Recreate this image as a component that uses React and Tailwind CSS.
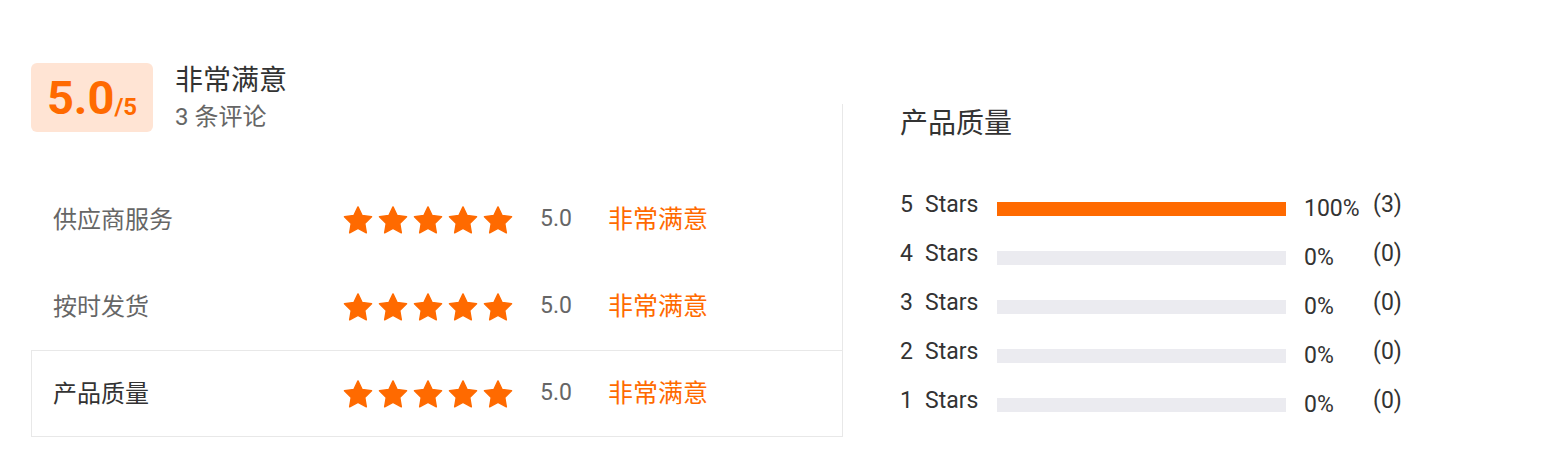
import React from "react";

const ORANGE = "text-[#ff6a00]";

const aspects = [
  { name: "供应商服务", score: "5.0", active: false },
  { name: "按时发货", score: "5.0", active: false },
  { name: "产品质量", score: "5.0", active: true },
];

const dist = [
  { star: 5, pct: 100, count: 3 },
  { star: 4, pct: 0, count: 0 },
  { star: 3, pct: 0, count: 0 },
  { star: 2, pct: 0, count: 0 },
  { star: 1, pct: 0, count: 0 },
];

function Star() {
  return (
    <svg width="30" height="30" viewBox="1.7 1.5 20.6 20.6" className="block">
      <path
        d="M12 2.8l2.85 5.9 6.45.92-4.67 4.55 1.1 6.43L12 17.55l-5.73 3.05 1.1-6.43L2.7 9.62l6.45-.92L12 2.8z"
        fill="#ff6a00"
        stroke="#ff6a00"
        strokeWidth="1"
        strokeLinejoin="round"
      />
    </svg>
  );
}

export default function App() {
  return (
    <div className="min-h-[469px] bg-white font-['Roboto','Noto_Sans_CJK_SC',sans-serif] pt-[63px] pl-[31px]">
      <div className="flex">
        {/* 左侧：总评分 + 各项评分 */}
        <div className="w-[812px]">
          <div className="flex items-start h-[69px]">
            <div className="w-[122px] h-[69px] rounded-md bg-[#ffe4d4] flex items-center justify-center">
              <span className={`text-[47px] font-bold leading-none ${ORANGE}`}>5.0</span>
              <span className={`text-[24px] font-bold leading-none mt-[18px] ${ORANGE}`}>/5</span>
            </div>
            <div className="ml-[22px]">
              <div className="text-[28px] leading-[36px] text-[#333]">非常满意</div>
              <div className="text-[24px] leading-[36px] text-[#666]">3 条评论</div>
            </div>
          </div>

          <div className="mt-[44px]">
            {aspects.map((a) => (
              <div
                key={a.name}
                className={`h-[87px] flex items-center pl-[21px] border ${
                  a.active ? "border-[#e8e8e8]" : "border-transparent"
                }`}
              >
                <div className={`w-[290px] text-[24px] ${a.active ? "text-[#333]" : "text-[#666]"}`}>
                  {a.name}
                </div>
                <div className="flex gap-[5px]">
                  {[0, 1, 2, 3, 4].map((i) => (
                    <Star key={i} />
                  ))}
                </div>
                <div className="ml-[27px] w-[68px] text-[23px] text-[#666]">{a.score}</div>
                <div className={`text-[25px] ${ORANGE}`}>非常满意</div>
              </div>
            ))}
          </div>
        </div>

        {/* 右侧：星级分布 */}
        <div className="mt-[41px] h-[333px] -ml-px border-l border-[#e8e8e8] pl-[57px]">
          <div className="text-[28px] leading-[40px] text-[#333]">产品质量</div>
          <div className="mt-[37px]">
            {dist.map((d) => (
              <div key={d.star} className="h-[49px] flex items-center text-[23px] text-[#333]">
                <span className="w-[25px]">{d.star}</span>
                <span className="w-[72px]">Stars</span>
                <div className="w-[289px] h-[14px] bg-[#ebebf0] mt-[6px]">
                  <div className="h-full bg-[#ff6a00]" style={{ width: `${d.pct}%` }} />
                </div>
                <span className="ml-[18px] w-[69px] mt-[7px]">{d.pct}%</span>
                <span>({d.count})</span>
              </div>
            ))}
          </div>
        </div>
      </div>
    </div>
  );
}
